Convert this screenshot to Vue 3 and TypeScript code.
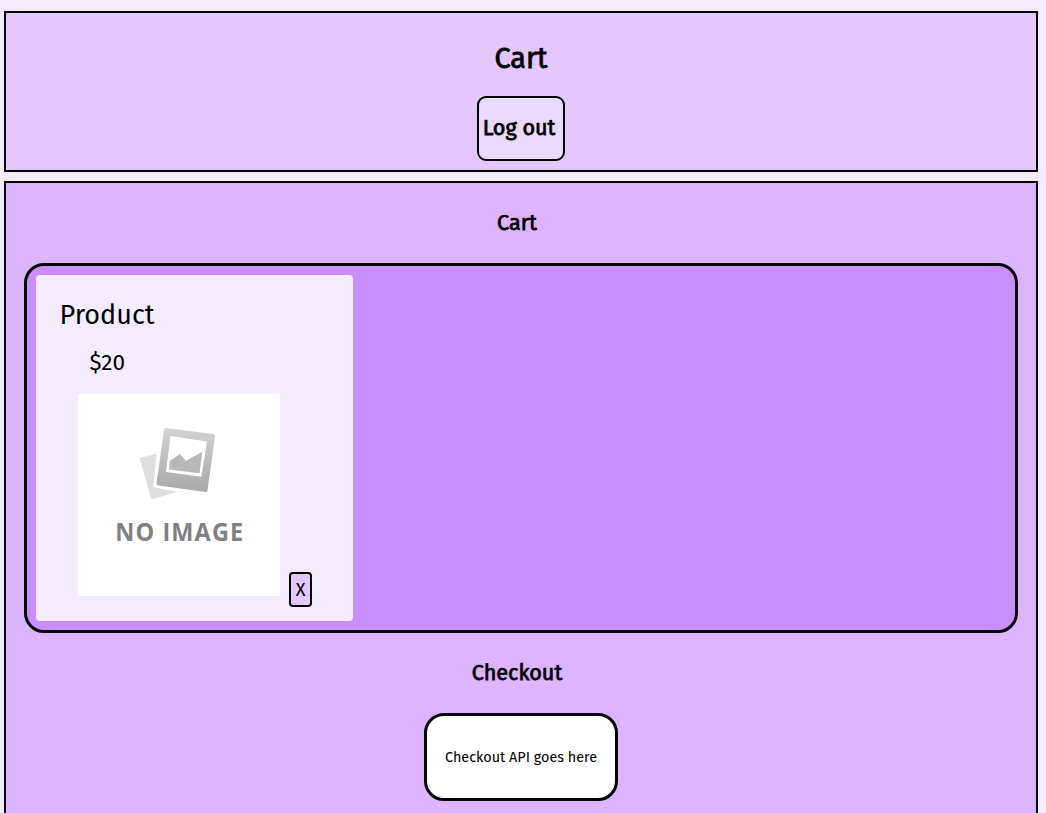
<script setup lang="ts">
import { ref } from 'vue'

interface Product {
  id: number
  name: string
  price: number
}

const products = ref<Product[]>([{ id: 1, name: 'Product', price: 20 }])

function removeProduct(id: number): void {
  products.value = products.value.filter((p) => p.id !== id)
}
</script>

<template>
  <div class="page">
    <header class="header">
      <h1 class="title">Cart</h1>
      <button class="logout" type="button">Log out</button>
    </header>
    <main class="main">
      <h2 class="heading">Cart</h2>
      <section class="cart">
        <article v-for="p in products" :key="p.id" class="card">
          <div class="name">{{ p.name }}</div>
          <div class="price">${{ p.price }}</div>
          <div class="media">
            <svg class="picture" viewBox="0 0 202 202" role="img" aria-label="No image">
              <defs>
                <linearGradient id="frame" x1="0" y1="0" x2="0" y2="1">
                  <stop offset="0" stop-color="#d2d2d2" />
                  <stop offset="1" stop-color="#a9a9a9" />
                </linearGradient>
              </defs>
              <rect width="202" height="202" fill="#fff" />
              <path d="M63 63.500 L78.500 60 L75.300 93.200 L99.500 97.700 L75 105 Q73.500 105.400 73 104 L61.800 65 Q61.500 63.900 63 63.500Z" fill="#dedede" />
              <path d="M88 34 L135.500 40 Q137.300 40.500 137 42.500 L129.500 96.500 Q129.200 98.200 127.500 98 L80 91.500 Q78.200 91 78.500 89.500 L86 36 Q86.300 34 88 34Z" fill="url(#frame)" />
              <path d="M92.500 42 L129 47.500 L123.300 82.700 L88 77.900Z" fill="#fff" />
              <path d="M91.700 67 L102 60 L108 66.700 L124.300 57.700 L121.500 79.300 L91 75.500Z" fill="#b8b8b8" />
              <text x="37.300" y="147" textLength="129" lengthAdjust="spacingAndGlyphs" class="caption">NO IMAGE</text>
            </svg>
            <button class="remove" type="button" @click="removeProduct(p.id)">X</button>
          </div>
        </article>
      </section>
      <h2 class="heading heading-checkout">Checkout</h2>
      <section class="checkout">Checkout API goes here</section>
    </main>
  </div>
</template>

<style>
body {
  background: #f4ebff;
  overflow: hidden;
}
</style>

<style scoped>
.page {
  box-sizing: border-box;
  height: 813px;
  overflow: hidden;
  padding: 11px 8px 0 4px;
  font-family: "Fira Sans", "Noto Sans", sans-serif;
  color: #000;
}
button {
  font-family: inherit;
  color: inherit;
  padding: 0;
  cursor: pointer;
}
.header {
  box-sizing: border-box;
  height: 161px;
  border: 2px solid #000;
  background: #e4c7ff;
  padding-top: 26px;
  display: flex;
  flex-direction: column;
  align-items: center;
}
.title {
  margin: 0;
  font-size: 28.8px;
  line-height: 40px;
  font-weight: 400;
  -webkit-text-stroke: 0.8px #000;
}
.logout {
  box-sizing: border-box;
  width: 88px;
  height: 65px;
  margin-top: 17px;
  padding: 0 4px 1px 0;
  border: 2px solid #000;
  border-radius: 9px;
  background: #ecd9ff;
  font-size: 21.6px;
  font-weight: 400;
  -webkit-text-stroke: 0.75px #000;
  white-space: nowrap;
  display: flex;
  align-items: center;
  justify-content: center;
}
.main {
  box-sizing: border-box;
  height: 700px;
  margin-top: 9px;
  border: 2px solid #000;
  background: #dcb4ff;
  padding: 20px 18px 0;
  display: flex;
  flex-direction: column;
  align-items: center;
}
.heading {
  margin: 0;
  padding-right: 8px;
  font-size: 21.6px;
  line-height: 40px;
  font-weight: 400;
  -webkit-text-stroke: 0.75px #000;
}
.heading-checkout {
  margin-top: 20px;
}
.cart {
  box-sizing: border-box;
  align-self: stretch;
  height: 370px;
  margin-top: 20px;
  padding: 9px;
  border: 3px solid #000;
  border-radius: 20px;
  background: #c98fff;
}
.card {
  box-sizing: border-box;
  width: 317px;
  height: 346px;
  padding-top: 20px;
  border-radius: 4px;
  background: #f4ebff;
}
.name {
  padding-left: 23.5px;
  font-size: 27px;
  line-height: 40px;
}
.price {
  padding-left: 53.6px;
  margin-top: 8px;
  font-size: 22.5px;
  line-height: 40px;
}
.media {
  display: flex;
  align-items: flex-end;
  gap: 9px;
  margin: 11px 0 0 42px;
  height: 213px;
}
.picture {
  width: 202px;
  height: 202px;
  align-self: flex-start;
}
.caption {
  font-family: "Open Sans", "Noto Sans", sans-serif;
  font-size: 25.5px;
  font-weight: 700;
  letter-spacing: 1.2px;
  fill: #808080;
}
.remove {
  box-sizing: border-box;
  width: 23px;
  height: 35px;
  padding-top: 1px;
  border: 2px solid #000;
  border-radius: 4px;
  background: #e4c7ff;
  font-size: 18px;
  line-height: 30px;
}
.checkout {
  box-sizing: border-box;
  width: 194px;
  height: 88px;
  margin-top: 20px;
  border: 3px solid #000;
  border-radius: 20px;
  background: #fff;
  font-size: 14.4px;
  display: flex;
  align-items: center;
  justify-content: center;
}
</style>
